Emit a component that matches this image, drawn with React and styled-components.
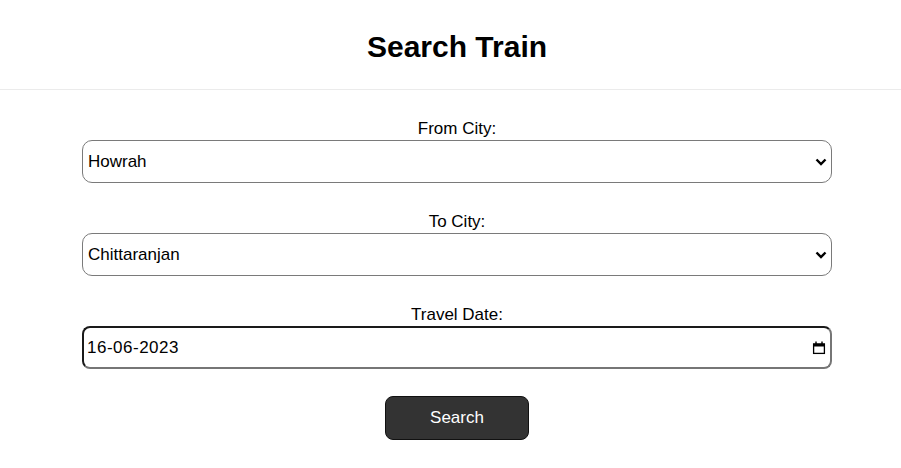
import React from "react";
import styled, { createGlobalStyle } from "styled-components";

const Global = createGlobalStyle`
  html, body { margin: 0; padding: 0; background: #fff; }
  body { font-family: "Liberation Sans", Arial, sans-serif; color: #000; }
`;

const Header = styled.header`
  height: 90px;
  border-bottom: 1px solid #ebebeb;
  display: flex;
  align-items: center;
  justify-content: center;
  padding-left: 13px;
  box-sizing: border-box;
`;

const Title = styled.h1`
  margin: 5px 0 0;
  font-size: 30px;
  line-height: 34px;
  font-weight: 700;
`;

const Main = styled.main`
  padding: 29px 0 0 13px;
`;

const Form = styled.form`
  width: 750px;
  margin: 0 auto;
  display: flex;
  flex-direction: column;
`;

const Group = styled.div`
  display: flex;
  flex-direction: column;
  margin-bottom: 29px;
`;

const Label = styled.label`
  display: block;
  text-align: center;
  font-size: 17px;
  line-height: 20px;
  margin-bottom: 1px;
`;

const Field = styled.div`
  position: relative;
`;

const Select = styled.select`
  appearance: none;
  -webkit-appearance: none;
  display: block;
  height: 43px;
  width: 100%;
  box-sizing: border-box;
  border: 1px solid #7a7a7a;
  border-radius: 10px;
  padding: 0 24px 0 5px;
  font-family: "Liberation Sans", Arial, sans-serif;
  font-size: 17px;
  color: #000;
  background: #fff;
`;

const DateInput = styled.input`
  display: block;
  height: 43px;
  width: 100%;
  box-sizing: border-box;
  border-style: solid;
  border-width: 2px;
  border-color: #1a1a1a #767676 #767676 #1a1a1a;
  border-radius: 8px;
  padding: 0 24px 0 3px;
  font-family: "Liberation Sans", Arial, sans-serif;
  font-size: 17px;
  letter-spacing: 0.5px;
  color: #000;
  background: #fff;
  outline: none;
`;

const FieldIcon = styled.svg`
  position: absolute;
  top: 50%;
  right: ${(p) => p.$right}px;
  transform: translateY(-50%);
  pointer-events: none;
`;

const Button = styled.button`
  align-self: center;
  width: 144px;
  height: 44px;
  margin-top: -2px;
  background: #333;
  color: #fff;
  border: 1px solid #111;
  border-radius: 8px;
  font-family: "Liberation Sans", Arial, sans-serif;
  font-size: 17px;
  cursor: pointer;
`;

const Chevron = () => (
  <FieldIcon $right={5} width="12" height="8" viewBox="0 0 12 8">
    <path d="M1.5 1.5 L6 6 L10.5 1.5" fill="none" stroke="#000" strokeWidth="2.4" />
  </FieldIcon>
);

const Calendar = () => (
  <FieldIcon $right={6} width="14" height="14" viewBox="0 0 14 14">
    <rect x="1.6" y="3.1" width="10.8" height="9.3" fill="none" stroke="#000" strokeWidth="1.3" />
    <rect x="1" y="2.5" width="12" height="3" fill="#000" />
    <rect x="3.3" y="0.5" width="1.4" height="2.5" fill="#000" />
    <rect x="9.3" y="0.5" width="1.4" height="2.5" fill="#000" />
  </FieldIcon>
);

export default function App() {
  return (
    <>
      <Global />
      <Header>
        <Title>Search Train</Title>
      </Header>
      <Main>
        <Form onSubmit={(e) => e.preventDefault()}>
          <Group>
            <Label htmlFor="from">From City:</Label>
            <Field>
              <Select id="from" defaultValue="Howrah">
                <option>Howrah</option>
                <option>Chittaranjan</option>
                <option>Sealdah</option>
              </Select>
              <Chevron />
            </Field>
          </Group>
          <Group>
            <Label htmlFor="to">To City:</Label>
            <Field>
              <Select id="to" defaultValue="Chittaranjan">
                <option>Howrah</option>
                <option>Chittaranjan</option>
                <option>Sealdah</option>
              </Select>
              <Chevron />
            </Field>
          </Group>
          <Group>
            <Label htmlFor="date">Travel Date:</Label>
            <Field>
              <DateInput id="date" type="text" defaultValue="16-06-2023" />
              <Calendar />
            </Field>
          </Group>
          <Button type="submit">Search</Button>
        </Form>
      </Main>
    </>
  );
}
